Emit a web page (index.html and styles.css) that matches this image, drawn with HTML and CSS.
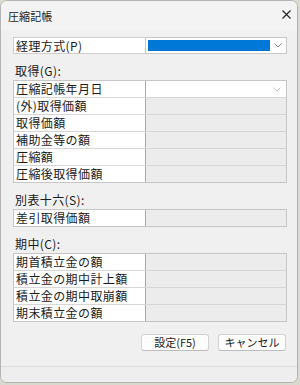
FILE: index.html
```html
<!DOCTYPE html>
<html>
<head>
	<title>圧縮記帳</title>
	<meta charset="utf-8">
	<link rel="stylesheet" href="styles.css">
</head>
<body>
	<div class="window">
		<div class="titlebar">
			<span class="title">圧縮記帳</span>
			<svg class="close" width="9" height="9" viewBox="0 0 9 9">
				<path d="M0.5 0.5 L8.5 8.5 M8.5 0.5 L0.5 8.5" stroke="#222" stroke-width="1.1" fill="none"/>
			</svg>
		</div>

		<div class="content">
			<div class="method">
				<div class="label-box">経理方式(P)</div>
				<div class="combo">
					<div class="selected"></div>
					<div class="arrow">
						<svg width="8" height="5" viewBox="0 0 8 5"><path d="M0.5 0.5 L4 4 L7.5 0.5" stroke="#8a8a8a" fill="none"/></svg>
					</div>
				</div>
			</div>

			<div class="group-title">取得(G):</div>
			<div class="grid">
				<div class="row">
					<div class="cell-label">圧縮記帳年月日</div>
					<div class="cell-value white">
						<svg class="faint" width="8" height="5" viewBox="0 0 8 5"><path d="M0.5 0.5 L4 4 L7.5 0.5" stroke="#c8c8c8" fill="none"/></svg>
					</div>
				</div>
				<div class="row"><div class="cell-label">(外)取得価額</div><div class="cell-value"></div></div>
				<div class="row"><div class="cell-label">取得価額</div><div class="cell-value"></div></div>
				<div class="row"><div class="cell-label">補助金等の額</div><div class="cell-value"></div></div>
				<div class="row"><div class="cell-label">圧縮額</div><div class="cell-value"></div></div>
				<div class="row"><div class="cell-label">圧縮後取得価額</div><div class="cell-value"></div></div>
			</div>

			<div class="group-title">別表十六(S):</div>
			<div class="grid">
				<div class="row"><div class="cell-label">差引取得価額</div><div class="cell-value"></div></div>
			</div>

			<div class="group-title">期中(C):</div>
			<div class="grid">
				<div class="row"><div class="cell-label">期首積立金の額</div><div class="cell-value"></div></div>
				<div class="row"><div class="cell-label">積立金の期中計上額</div><div class="cell-value"></div></div>
				<div class="row"><div class="cell-label">積立金の期中取崩額</div><div class="cell-value"></div></div>
				<div class="row"><div class="cell-label">期末積立金の額</div><div class="cell-value"></div></div>
			</div>

			<div class="buttons">
				<button class="btn">設定(F5)</button>
				<button class="btn">キャンセル</button>
			</div>
		</div>

		<div class="footer"></div>
	</div>
</body>
</html>
```

FILE: styles.css
```css
body{
	margin: 0;
	background: #d9d9cf;
	font-family: "Noto Sans CJK JP", "Noto Sans", sans-serif;
	color: #1b1b1b;
}
.window{
	width: 296px;
	height: 381px;
	background: #f0f0f0;
	border: 1px solid #b4b4b4;
	border-radius: 7px;
	display: flex;
	flex-direction: column;
	overflow: hidden;
}
.titlebar{
	height: 29px;
	display: flex;
	align-items: center;
	justify-content: space-between;
	padding: 0 6px 0 7px;
	background: #f3f3f3;
}
.title{
	font-size: 11px;
	letter-spacing: 0.1px;
}
.close{
	margin-bottom: 2px;
}
.content{
	padding: 7px 10px 0 12px;
	flex: 1;
}
.method{
	display: flex;
	height: 17px;
}
.label-box{
	width: 129px;
	border: 1px solid #cfcfcf;
	border-right: none;
	background: #fff;
	font-size: 12px;
	line-height: 15px;
	padding-left: 2px;
	letter-spacing: 0.4px;
}
.combo{
	flex: 1;
	display: flex;
	border: 1px solid #c8c8c8;
	background: #fff;
	padding: 2px 0 2px 2px;
}
.selected{
	flex: 1;
	background: #0078d7;
}
.arrow{
	width: 16px;
	display: flex;
	align-items: center;
	justify-content: center;
}
.group-title{
	margin-top: 8px;
	margin-bottom: 1px;
	height: 17px;
	line-height: 17px;
	font-size: 12px;
	padding-left: 2px;
	letter-spacing: 0.4px;
}
.grid{
	border: 1px solid #c6c6c6;
}
.row{
	display: flex;
	height: 16px;
	border-top: 1px solid #d6d6d6;
}
.row:first-child{
	border-top: none;
}
.cell-label{
	width: 129px;
	background: #fff;
	border-right: 1px solid #a9a9a9;
	font-size: 12px;
	line-height: 16px;
	padding-left: 2px;
	letter-spacing: 0.4px;
	white-space: nowrap;
}
.cell-value{
	flex: 1;
	background: #ececec;
}
.cell-value.white{
	background: #fff;
	display: flex;
	justify-content: flex-end;
	align-items: center;
	padding-right: 5px;
}
.buttons{
	display: flex;
	justify-content: flex-end;
	gap: 9px;
	margin-top: 12px;
	padding-right: 1px;
}
.btn{
	width: 68px;
	height: 17px;
	padding: 0;
	background: #fdfdfd;
	border: 1px solid #d3d3d3;
	border-bottom-color: #bdbdbd;
	border-radius: 3px;
	font-family: "Noto Sans CJK JP", sans-serif;
	font-size: 11px;
	line-height: 15px;
	color: #1b1b1b;
}
.footer{
	height: 15px;
	border-top: 1px solid #dcdcdc;
	background: #eeeeee;
}
```
